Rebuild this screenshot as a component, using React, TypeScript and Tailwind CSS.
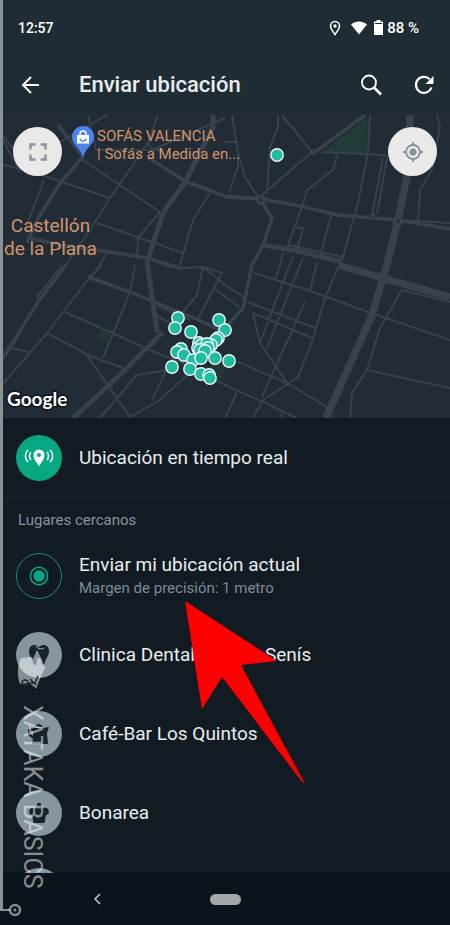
import type { ReactNode } from "react";

const MinorRoads = [
  "M2 138L20 172",
  "M0 164L37 173L62 182L110 198",
  "M107 115L60 142M0 132L14 150",
  "M44 180L28 222",
  "M158 115L148 143L110 198L90 230L66 265L38 302",
  "M107 253L94 274M62 265L38 296L37 306",
  "M83 160L160 212L138 238L137 257M160 212L157 216",
  "M97 223L137 237L183 253",
  "M210 193L193 220L180 265",
  "M88 115L96 150L160 150M148 143L152 150L225 118",
  "M278 115L278 127L270 147L267 193",
  "M282 115L312 152L262 195",
  "M370 115L368 153L358 203L342 260",
  "M322 152L368 154L388 156",
  "M337 155L333 170L307 190L302 207L287 248",
  "M383 158L372 215M387 158L377 214",
  "M437 115L440 127L432 170L420 190L418 223",
  "M232 115L238 153L245 177L258 197M225 142L237 142M238 153L238 167L229 193",
  "M332 212L320 257M293 227L303 228L297 250M288 245L343 257",
  "M283 253L280 265L275 280M293 256L260 343M303 258L267 348M317 262L310 291",
  "M253 273L308 290L368 312L450 340",
  "M248 302L315 328M312 338L253 313L260 343L287 383L327 407",
  "M305 302L262 397",
  "M338 268L325 298L312 342L298 377L263 400L253 418",
  "M238 362L287 383M225 385L263 402L297 418M237 392L225 418M283 411L280 418",
  "M402 290L380 328L367 370L352 393L350 418M402 290L450 302M367 370L450 388",
  "M203 267L225 285L245 298M214 288L225 297L240 307",
  "M102 265L90 277L47 333L0 387",
  "M65 312L112 333L150 350L187 365M47 333L88 355L123 368M88 357L130 417",
  "M135 265L130 292L103 358M7 347L28 352",
  "M167 370L137 375L100 418M187 375L160 400L130 417M166 371L152 400",
  "M162 265L180 268L203 267L197 295L183 312M203 267L222 273L197 320",
  "M157 305L190 320M157 316L178 327L170 334M210 378L230 387",
  "M398 220L450 223",
];

const MainRoads = [
  "M83 157L60 183L37 220L27 243",
  "M58 125L83 157",
  "M66 265L38 302L7 352L0 362",
  "M147 157L187 182L225 196L262 199",
  "M30 238L60 245L110 252L147 258L180 268",
  "M225 197L262 199L305 207L338 215L398 220L450 229",
  "M365 115L315 152",
  "M88 277L130 292L187 315L225 332",
  "M262 202L272 218L263 245L252 265L243 308L225 328",
];

const Avenues = [
  "M213 115L213 127L185 182L163 213L147 262L157 332",
  "M163 332L120 375L73 418",
  "M263 245L302 252L342 262",
];

const Pins = [
  [277, 155], [178, 318], [175, 328], [191, 332], [219, 320], [225, 330],
  [218, 338], [216, 340], [199, 343], [181, 349], [177, 352], [184, 355],
  [198, 348], [202, 345], [211, 345], [207, 344], [200, 350], [208, 348],
  [205, 351], [193, 360], [201, 358], [215, 358], [229, 361], [172, 367],
  [190, 369], [201, 374], [209, 375], [210, 378],
];

const StreetMap = () => (
  <svg viewBox="0 114 450 304" preserveAspectRatio="xMidYMid slice" className="absolute inset-0 h-full w-full" fill="none">
    <rect y="114" width="450" height="304" fill="#212c37" />
    <path d="M367 117L322 152L368 153Z" fill="#233b38" />
    <path d="M101 330l10 4l-4 9l-10-4zM212 360l14 8l-6 14l-14-6z" fill="#223a36" />
    <g stroke="#38424c" strokeLinejoin="round">
      <path d={MinorRoads.join("")} strokeWidth="2" />
      <path d={MainRoads.join("")} strokeWidth="3.500" />
      <path d={Avenues.join("")} strokeWidth="5" />
      <path d="M338 265L382 278L450 297M410 115L407 177L398 220L387 265L372 315L326 418" strokeWidth="7.500" />
      <circle cx="261" cy="200" r="3.500" strokeWidth="3" fill="#212c37" />
      <circle cx="398" cy="221" r="3.500" strokeWidth="4" fill="#212c37" />
      <circle cx="313" cy="152" r="2" strokeWidth="2" fill="#212c37" />
      <circle cx="373" cy="217" r="2" strokeWidth="2" fill="#212c37" />
    </g>
    {Pins.map(([x, y], i) => (
      <circle key={i} cx={x} cy={y} r="6.2" fill="#1fbba2" stroke="#eefaf8" strokeWidth="1.4" />
    ))}
    <path d="M83 158C81 148 72 145 72 137a11 11 0 0 1 22 0c0 8-9 11-11 21z" fill="#4a86ee" />
    <path d="M77 135h12v8.500h-12z" fill="#fff" />
    <path d="M80 136v-2a3 3 0 0 1 6 0v2" stroke="#fff" strokeWidth="1.500" />
    <path d="M80 138.500a3 2.500 0 0 0 6 0" stroke="#4a86ee" strokeWidth="1.300" />
  </svg>
);

const StatusBar = () => (
  <div className="flex h-[55px] items-center pr-[31px] pl-[18px] text-[14px] leading-5 font-medium text-white">
    <span className="flex-1">12:57</span>
    <svg width="12" height="16" viewBox="0 0 12 16" fill="none" className="mr-[10px]">
      <path d="M6 14.500C4 11.500 1.500 8.800 1.500 6a4.500 4.500 0 0 1 9 0c0 2.800-2.500 5.500-4.500 8.500z" stroke="#fff" strokeWidth="1.500" />
      <circle cx="6" cy="6" r="1.700" fill="#fff" />
    </svg>
    <svg width="16" height="14" viewBox="0 0 16 14" className="mr-[7px]">
      <path d="M0 3.500C4.500-.6 11.500-.6 16 3.500L8 13.500z" fill="#fff" />
    </svg>
    <svg width="9" height="15" viewBox="0 0 9 15" className="mr-1">
      <path d="M2.500 0h4v1.500H9V15H0V1.500h2.500z" fill="#fff" />
      <path d="M1 3.500h7" stroke="#202c33" />
    </svg>
    <span className="text-[15px]">88 %</span>
  </div>
);

const Header = () => (
  <header className="flex h-[59px] items-center pr-4 pl-5 text-white">
    <button aria-label="Atrás" className="mr-[37px]">
      <svg width="22" height="22" viewBox="0 0 22 22" fill="none" stroke="currentColor" strokeWidth="2">
        <path d="M19 11H3M11 3L3 11l8 8" />
      </svg>
    </button>
    <h1 className="flex-1 text-[22px] leading-7 font-medium text-[#e9edef]">Enviar ubicación</h1>
    <button aria-label="Buscar" className="mr-8">
      <svg width="22" height="22" viewBox="0 0 22 22" fill="none" stroke="currentColor">
        <circle cx="9" cy="8.500" r="7" strokeWidth="1.800" />
        <path d="M14 13.500L21 20.500" strokeWidth="2.600" />
      </svg>
    </button>
    <button aria-label="Actualizar">
      <svg width="20" height="20" viewBox="0 0 20 20" fill="none">
        <path d="M17.500 12.500A8 8 0 1 1 15.700 4.300" stroke="currentColor" strokeWidth="2.200" />
        <path d="M19.500 1v8h-8z" fill="currentColor" />
      </svg>
    </button>
  </header>
);

const MapPanel = () => (
  <section className="relative h-[304px] overflow-hidden">
    <StreetMap />
    <div className="relative flex items-start justify-between pt-[13px] pr-[13px] pl-[13px]">
      <button aria-label="Pantalla completa" className="grid size-[49px] place-items-center rounded-full bg-[#e9e9ea] shadow">
        <svg width="18" height="18" viewBox="0 0 18 18" fill="none" stroke="#8b979d" strokeWidth="2.500">
          <path d="M1.500 6.500v-5h5M11.500 1.500h5v5M16.500 11.500v5h-5M6.500 16.500h-5v-5" />
        </svg>
      </button>
      <p className="mr-auto ml-[35px] text-[15px] leading-[18px] text-[#d49468]">
        SOFÁS VALENCIA<br />| Sofás a Medida en...
      </p>
      <button aria-label="Mi ubicación" className="grid size-[49px] place-items-center rounded-full bg-[#e9e9ea] shadow">
        <svg width="20" height="20" viewBox="0 0 20 20" fill="none" stroke="#84919a">
          <circle cx="10" cy="10" r="7" strokeWidth="1.800" />
          <circle cx="10" cy="10" r="3.500" fill="#84919a" stroke="none" />
          <path d="M10 0v3M10 17v3M0 10h3M17 10h3" strokeWidth="1.800" />
        </svg>
      </button>
    </div>
    <p className="absolute top-[100px] left-1 text-center text-[19px] leading-[23px] text-[#d49468]">
      Castellón<br />de la Plana
    </p>
    <span className="absolute bottom-[5px] left-[7px] font-[Lato] text-[19px] leading-7 font-bold text-white [paint-order:stroke] [-webkit-text-stroke:3px_#10161b]">
      Google
    </span>
  </section>
);

const ToothIcon = () => (
  <svg width="24" height="24" viewBox="0 0 24 24" fill="none">
    <path d="M12 4C8 0 2 2 2 8c0 5 3 7 4 11 .8 4 3 4 3.500 1 .4-3 1-5 2.500-5s2.100 2 2.500 5c.5 3 2.700 3 3.500-1 1-4 4-6 4-11 0-6-6-8-10-4z" fill="#17232b" />
    <path d="M9 3c2 3 5 3.500 8 2" stroke="#8696a0" strokeWidth="1.300" />
  </svg>
);

const CafeIcon = () => (
  <svg width="22" height="22" viewBox="0 0 22 22" fill="#17232b">
    <path d="M6.500 4c1-4 7-4 8 0zM6 5h9l6-1-2 6 1 11H4l1-5-5-4V6z" />
    <path d="M5 8v5l-2-2V8z" fill="#8696a0" />
  </svg>
);

const CupcakeIcon = () => (
  <svg width="22" height="22" viewBox="0 0 22 22" fill="#17232b">
    <circle cx="11" cy="3" r="2.200" />
    <circle cx="11" cy="8" r="4.500" />
    <circle cx="5" cy="9.500" r="3.800" />
    <circle cx="17" cy="9.500" r="3.800" />
    <path d="M4 12h14l-1.500 9h-11z" />
  </svg>
);

const places = [
  { name: "Clinica Dental", rest: "Senís", icon: <ToothIcon /> },
  { name: "Café-Bar Los Quintos", icon: <CafeIcon /> },
  { name: "Bonarea", icon: <CupcakeIcon /> },
];

const Row = ({ badge, children }: { badge: ReactNode; children: ReactNode }) => (
  <button className="flex h-[79px] w-full items-center pl-4 text-left">
    {badge}
    <span className="ml-[17px] text-[19px] leading-6 text-[#e9edef]">{children}</span>
  </button>
);

const LiveBadge = () => (
  <span className="grid size-[46px] place-items-center rounded-full bg-[#06a884]">
    <svg width="30" height="20" viewBox="0 0 30 20" fill="none" stroke="#fff" strokeWidth="1.500">
      <path d="M15 18.500C13 14.500 9.500 11.500 9.500 7a5.500 5.500 0 0 1 11 0c0 4.500-3.500 7.500-5.500 11.500z" fill="#fff" stroke="none" />
      <circle cx="15" cy="7" r="2" fill="#06a884" stroke="none" />
      <path d="M4 2C.5 5 .5 11 4 14M7 4C5 6 5 10 7 12M26 2c3.500 3 3.500 9 0 12M23 4c2 2 2 6 0 8" />
    </svg>
  </span>
);

const CurrentBadge = () => (
  <span className="grid size-[46px] place-items-center rounded-full border border-[#139377]">
    <svg width="20" height="20" viewBox="0 0 20 20">
      <circle cx="10" cy="10" r="8.700" fill="none" stroke="#06a884" strokeWidth="1.500" />
      <circle cx="10" cy="10" r="5.700" fill="#06a884" />
    </svg>
  </span>
);

const Watermark = () => (
  <div className="pointer-events-none absolute bottom-0 left-0 text-white/50">
    <svg width="50" height="280" viewBox="0 645 50 280" fill="none" stroke="currentColor">
      <circle cx="15" cy="910" r="5" strokeWidth="2.500" />
      <circle cx="15" cy="910" r="1.500" fill="currentColor" stroke="none" />
      <path d="M37 650l5 10 3 8-4 8-5 13-5-13-3-8 5-9z" fill="currentColor" stroke="none" />
      <path d="M21 658l11-1 1 2-5 9 3 8 5 12-7-5-9 1c-3-9-3-18 1-26z" fill="currentColor" stroke="none" />
      <circle cx="25" cy="683" r="3" stroke="#20282e" strokeWidth="1.500" />
      <path d="M28 683h7l3-7M30 679l6 6" stroke="#20282e" strokeWidth="1.500" />
    </svg>
    <span className="absolute bottom-9 left-[17px] text-[25px] leading-[30px] [writing-mode:vertical-rl]">XATAKA BASICS</span>
  </div>
);

const App = () => (
  <main className="relative overflow-hidden bg-[#121b22] font-[Roboto,sans-serif]">
    <div className="bg-[#202c33]">
      <StatusBar />
      <Header />
    </div>
    <MapPanel />

    <div className="border-b border-[#1c272e]">
      <Row badge={<LiveBadge />}>Ubicación en tiempo real</Row>
    </div>
    <h2 className="px-[18px] pt-[10px] pb-1 text-[15px] leading-6 text-[#8696a0]">Lugares cercanos</h2>
    <div className="relative">
      <Row badge={<CurrentBadge />}>
        Enviar mi ubicación actual
        <span className="block text-[15px] leading-[22px] text-[#7d8c96]">Margen de precisión: 1 metro</span>
      </Row>
      {places.map((place) => (
        <Row
          key={place.name}
          badge={<span className="grid size-[46px] place-items-center rounded-full bg-[#8696a0]">{place.icon}</span>}
        >
          {place.name}
          {place.rest && <span className="ml-[70px]">{place.rest}</span>}
        </Row>
      ))}
      <svg width="120" height="184" viewBox="184 600 120 184" className="pointer-events-none absolute top-16 left-[184px]">
        <path d="M185 601L277 661L241 665L304 782L303 783L222 677L202 709Z" fill="#fe0000" />
      </svg>
    </div>
    <div className="h-[21px] overflow-hidden pt-4 pl-4">
      <div className="size-[46px] rounded-full bg-[#8696a0]" />
    </div>

    <nav className="relative flex h-[52px] items-center justify-center bg-[#0b141a]">
      <button aria-label="Volver" className="absolute left-[93px]">
        <svg width="8" height="12" viewBox="0 0 8 12" fill="none" stroke="#c5c9cb" strokeWidth="1.500">
          <path d="M7 1L2 6l5 5" />
        </svg>
      </button>
      <button aria-label="Inicio" className="h-[11px] w-[31px] rounded-full bg-[#a4a8aa]" />
    </nav>
    <div className="pointer-events-none absolute top-0 bottom-[14px] left-0 w-[10px]">
      <div className="h-full w-[3px] bg-[#8b9296]" />
      <div className="-mt-[2px] h-[2px] w-[10px] bg-[#8b9296]" />
    </div>
    <Watermark />
  </main>
);

export default App;
